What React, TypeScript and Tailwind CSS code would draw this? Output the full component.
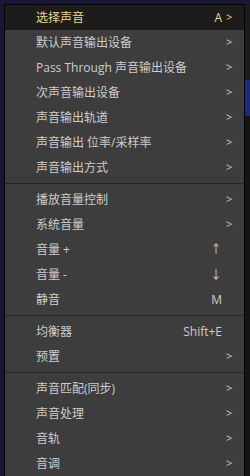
type Item = { label: string; key?: string; sub?: boolean; active?: boolean } | 'sep';

const items: Item[] = [
  { label: '选择声音', key: 'A', sub: true, active: true },
  { label: '默认声音输出设备', sub: true },
  { label: 'Pass Through 声音输出设备', sub: true },
  { label: '次声音输出设备', sub: true },
  { label: '声音输出轨道', sub: true },
  { label: '声音输出 位率/采样率', sub: true },
  { label: '声音输出方式', sub: true },
  'sep',
  { label: '播放音量控制', sub: true },
  { label: '系统音量', sub: true },
  { label: '音量 +', key: '↑' },
  { label: '音量 -', key: '↓' },
  { label: '静音', key: 'M' },
  'sep',
  { label: '均衡器', key: 'Shift+E' },
  { label: '预置', sub: true },
  'sep',
  { label: '声音匹配(同步)', sub: true },
  { label: '声音处理', sub: true },
  { label: '音轨', sub: true },
  { label: '音调', sub: true },
];

const MenuRow = ({ label, key: _k, shortcut, sub, active }: { label: string; key?: string; shortcut?: string; sub?: boolean; active?: boolean }) => (
  <div
    className={`flex h-[25px] items-center pl-[31px] pr-[12px] ${active ? 'bg-[#1d1c1b] text-[#e6da86]' : 'text-[#cdcdcd]'}`}
  >
    <span className="flex-1 truncate">{label}</span>
    {shortcut ? <span className="mr-[4px]">{shortcut}</span> : null}
    <span className="w-[6px] text-[11px]">{sub ? '>' : ''}</span>
  </div>
);

export default function App() {
  return (
    <div
      className="h-[476px] w-[250px] overflow-hidden bg-[#161636] pl-[4px] pt-[4px]"
      style={{ fontFamily: '"Open Sans", "Noto Sans CJK SC", sans-serif' }}
    >
      <div className="flex h-full">
        <div className="h-full w-[241px] border-x border-t border-black bg-[#3d3d3d] text-[12px]">
          {items.map((it, i) =>
            it === 'sep' ? (
              <div key={i} className="flex h-[7px] items-center">
                <div className="h-[1px] w-full bg-[#262626]" />
              </div>
            ) : (
              <MenuRow key={i} label={it.label} shortcut={it.key} sub={it.sub} active={it.active} />
            ),
          )}
        </div>
        <div className="flex flex-1 flex-col">
          <div className="h-[76px] bg-[#1c1c1c]" />
          <div className="h-[36px] bg-[#1b2a7a]" />
          <div className="flex-1 bg-[#141414]" />
        </div>
      </div>
    </div>
  );
}
